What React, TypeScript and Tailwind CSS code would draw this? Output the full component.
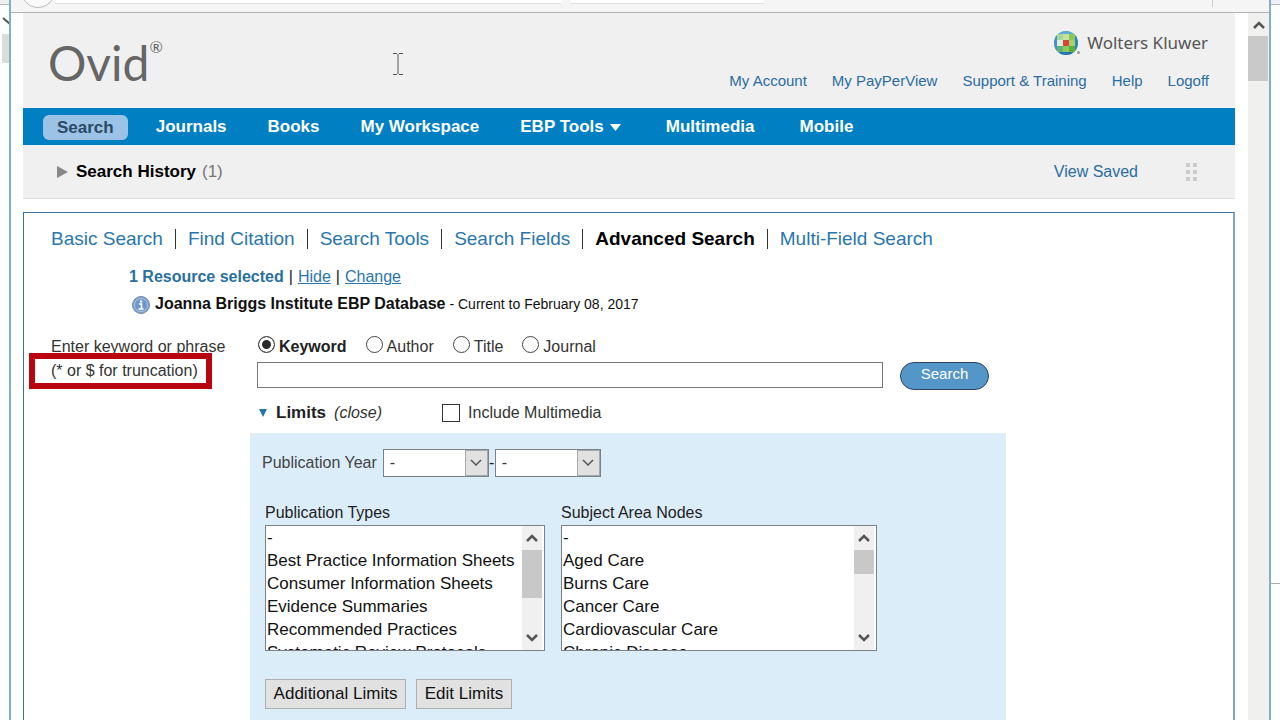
import { useState } from "react";
import type { ReactNode } from "react";

const accountLinks = ["My Account", "My PayPerView", "Support & Training", "Help", "Logoff"];

const searchModes = [
    "Basic Search",
    "Find Citation",
    "Search Tools",
    "Search Fields",
    "Advanced Search",
    "Multi-Field Search",
];

const fields = ["Keyword", "Author", "Title", "Journal"];

const publicationTypes = [
    "-",
    "Best Practice Information Sheets",
    "Consumer Information Sheets",
    "Evidence Summaries",
    "Recommended Practices",
    "Systematic Review Protocols",
];

const subjectNodes = ["-", "Aged Care", "Burns Care", "Cancer Care", "Cardiovascular Care", "Chronic Disease"];

const Chevron = ({ up = false, thin = false }: { up?: boolean; thin?: boolean }) => (
    <svg width="12" height="8" viewBox="0 0 12 8" fill="none" stroke="#555" strokeWidth={thin ? 1.5 : 2.5}>
        <path d={up ? "M1 7 6 2l5 5" : "M1 1l5 5 5-5"} />
    </svg>
);

const WoltersKluwerMark = () => (
    <svg width="28" height="26" viewBox="0 0 28 26" aria-hidden="true">
        <defs>
            <clipPath id="globe">
                <circle cx="13" cy="13" r="12" />
            </clipPath>
        </defs>
        <g clipPath="url(#globe)">
            <rect width="26" height="26" fill="#7cc04b" />
            <rect width="26" height="4" fill="#5aa9d6" />
            <rect y="22" width="26" height="4" fill="#2273b8" />
            <rect width="4" height="26" fill="#3e93cb" />
            <rect x="22" width="4" height="26" fill="#2f86c4" />
            <rect x="4" y="4" width="6" height="6" fill="#a5d6a0" />
            <rect x="10" y="4" width="6" height="6" fill="#c5e3a0" />
            <rect x="16" y="4" width="6" height="6" fill="#8cc95a" />
            <rect x="4" y="10" width="6" height="6" fill="#dcefd8" />
            <rect x="16" y="10" width="6" height="6" fill="#a4d468" />
            <rect x="4" y="16" width="6" height="6" fill="#62b07c" />
            <rect x="10" y="16" width="6" height="6" fill="#8ccb55" />
            <rect x="16" y="16" width="6" height="6" fill="#5eb13f" />
            <rect x="10" y="10" width="6" height="6" fill="#d8453c" />
        </g>
        <circle cx="25.500" cy="22.500" r="1.500" fill="#999" />
    </svg>
);

const InfoIcon = () => (
    <svg width="20" height="20" viewBox="0 0 20 20" aria-hidden="true">
        <circle cx="10" cy="11" r="8.500" fill="#7fa5d6" stroke="#74869f" />
        <circle cx="10" cy="11" r="6.500" fill="#6d96cf" stroke="#a9c3e6" />
        <circle cx="10" cy="7.500" r="1.300" fill="#fff" />
        <path d="M8 10h2.500v5M7.500 15h5" fill="none" stroke="#fff" strokeWidth="1.500" />
    </svg>
);

const NavItem = ({ children, className = "" }: { children: ReactNode; className?: string }) => (
    <li className={className}>
        <a href="#" className="flex items-center gap-1.5 whitespace-nowrap">{children}</a>
    </li>
);

const YearSelect = ({ label }: { label: string }) => (
    <div className="relative w-[106px]">
        <select
            aria-label={label}
            className="block h-7 w-full appearance-none border border-[#7a8288] bg-white px-1.5 text-base text-[#333]"
        >
            <option>-</option>
        </select>
        <span className="pointer-events-none absolute inset-y-px right-px flex w-[23px] items-center justify-center border border-[#a5a8aa] bg-[#e1e1e1]">
            <Chevron thin />
        </span>
    </div>
);

type ListBoxProps = { id: string; label: string; options: string[]; width: string; thumb: string };

const ListBox = ({ id, label, options, width, thumb }: ListBoxProps) => (
    <div className={width}>
        <label htmlFor={id} className="block h-6 text-base leading-6">{label}</label>
        <div className="flex h-[126px] border border-[#7a8288] bg-white">
            <select id={id} multiple size={5} className="min-w-0 flex-1 overflow-hidden pt-0.5 text-[17px] text-[#111]">
                {options.map((option) => (
                    <option key={option} className="h-[23px] px-px py-0 leading-[23px]">{option}</option>
                ))}
            </select>
            <div className="mr-0.5 flex w-5 flex-col items-center bg-[#f0f0f0]">
                <span className="flex h-6 items-center"><Chevron up /></span>
                <span className={`w-full bg-[#c8c8c8] ${thumb}`} />
                <span className="mt-auto flex h-6 items-center"><Chevron /></span>
            </div>
        </div>
    </div>
);

const Header = () => (
    <header className="flex h-[95px] justify-between bg-[#f0f0f0] pr-[26px] pl-[25px]">
        <div className="flex pt-[18px] text-[#666]">
            <span className="font-[Lato] text-5xl leading-[64px]">Ovid</span>
            <span className="pt-1 font-[Lato] text-base leading-6">®</span>
        </div>
        <div className="flex flex-col items-end pt-4">
            <div className="flex items-center gap-1.5 pr-px text-[#555]">
                <WoltersKluwerMark />
                <span className="font-['Noto_Sans'] text-[17px] leading-7">Wolters Kluwer</span>
            </div>
            <nav className="mt-3.5 flex gap-[25px] text-[15px] leading-5 text-[#2a6ca3]">
                {accountLinks.map((link) => (
                    <a key={link} href="#" className="whitespace-nowrap">{link}</a>
                ))}
            </nav>
        </div>
    </header>
);

const MainNav = () => (
    <nav className="bg-[#007fc3]">
        <ul className="flex h-[37px] items-center pt-px pl-5 text-[17px] font-bold text-white">
            <li className="mr-7">
                <a href="#" className="block rounded-md bg-[#9cc3e6] px-3.5 text-[#2b4a66] leading-[25px]">Search</a>
            </li>
            <NavItem className="mr-[41px]">Journals</NavItem>
            <NavItem className="mr-[41px]">Books</NavItem>
            <NavItem className="mr-[41px]">My Workspace</NavItem>
            <NavItem className="mr-[45px]">
                EBP Tools
                <svg width="11" height="7" viewBox="0 0 11 7" fill="#fff"><path d="M0 0h11L5.500 7z" /></svg>
            </NavItem>
            <NavItem className="mr-[45px]">Multimedia</NavItem>
            <NavItem>Mobile</NavItem>
        </ul>
    </nav>
);

const SearchHistory = () => (
    <section className="flex h-[54px] items-center border-b border-[#dcdcdc] bg-[#f0f0f0] pr-[38px] pl-[34px]">
        <button type="button" className="flex items-center gap-2 text-[17px]">
            <svg width="11" height="12" viewBox="0 0 11 12" fill="#888"><path d="M0 0l11 6-11 6z" /></svg>
            <span className="font-bold">Search History</span>
        </button>
        <span className="ml-1.5 text-[17px] text-[#777]">(1)</span>
        <a href="#" className="mr-12 ml-auto text-base text-[#2a6ca3]">View Saved</a>
        <svg width="11" height="18" viewBox="0 0 11 18" fill="#ccc">
            <path d="M0 0h4v4H0zM7 0h4v4H7zM0 7h4v4H0zM7 7h4v4H7zM0 14h4v4H0zM7 14h4v4H7z" />
        </svg>
    </section>
);

const Limits = () => (
    <div className="w-full max-w-[756px] flex-1 bg-[#daedf9] pt-4 pl-3 text-[#222]">
        <div className="flex items-center">
            <span className="mr-1.5 text-base text-[#444]">Publication Year</span>
            <YearSelect label="Publication year from" />
            <span className="w-1.5 text-center text-base">-</span>
            <YearSelect label="Publication year to" />
        </div>
        <div className="mt-6 flex gap-4 pl-[3px]">
            <ListBox id="types" label="Publication Types" options={publicationTypes} width="w-[280px]" thumb="h-12" />
            <ListBox id="nodes" label="Subject Area Nodes" options={subjectNodes} width="w-[316px]" thumb="h-6" />
        </div>
        <div className="mt-7 flex gap-2.5 pl-[3px] text-[17px] text-[#111]">
            <button type="button" className="h-[30px] w-[141px] border border-[#adadad] bg-[#e1e1e1] whitespace-nowrap">Additional Limits</button>
            <button type="button" className="h-[30px] w-24 border border-[#adadad] bg-[#e1e1e1] whitespace-nowrap">Edit Limits</button>
        </div>
    </div>
);

const SearchPanel = () => {

    const [field, setField] = useState<string>("Keyword");
    const [query, setQuery] = useState<string>("");

    return (
        <section className="mt-[13px] flex flex-1 flex-col border border-r-2 border-b-0 border-[#33709f] border-r-[#7fa9c2] bg-white">
            <nav className="mt-3 flex h-7 items-center pl-[27px] text-[19px] whitespace-nowrap">
                {searchModes.map((mode, i) => (
                    <div key={mode} className="flex items-center">
                        {i > 0 && <span className="mx-3 h-5 w-px bg-[#333]" />}
                        <a href="#" className={mode === "Advanced Search" ? "font-bold text-black" : "text-[#2a76ac]"}>{mode}</a>
                    </div>
                ))}
            </nav>

            <div className="mt-3 pl-[105px] text-base">
                <p className="flex h-6 items-center gap-[5px] text-[#222]">
                    <b className="text-[#2a6f9f]">1 Resource selected</b>|
                    <a href="#" className="text-[#2a76ac] underline">Hide</a>|
                    <a href="#" className="text-[#2a76ac] underline">Change</a>
                </p>
                <p className="flex h-[30px] items-center gap-1 pl-0.5 text-[#111]">
                    <InfoIcon />
                    <b>Joanna Briggs Institute EBP Database</b>
                    <span className="text-sm">- Current to February 08, 2017</span>
                </p>
            </div>

            <form className="mt-4 flex flex-1" onSubmit={(e) => e.preventDefault()}>
                <div className="w-[226px] shrink-0 pl-[27px] text-base leading-6 text-[#333]">
                    <label htmlFor="query">Enter keyword or phrase</label>
                    <div className="relative">
                        (* or $ for truncation)
                        <span className="pointer-events-none absolute -top-1.5 -left-[22px] h-9 w-[183px] border-6 border-[#b90510]" />
                    </div>
                </div>

                <div className="flex min-w-0 flex-1 flex-col">
                    <div className="flex h-6 items-center gap-[19px] pl-2">
                        {fields.map((name) => (
                            <label key={name} className={`flex items-center gap-1 text-base ${field === name ? "font-bold text-[#222]" : "text-[#333]"}`}>
                                <input
                                    type="radio"
                                    name="field"
                                    checked={field === name}
                                    onChange={() => setField(name)}
                                    className="mb-1.5 size-[17px] appearance-none rounded-full border border-[#444] bg-white checked:bg-[#2b2b2b] checked:shadow-[inset_0_0_0_3px_white]"
                                />
                                {name}
                            </label>
                        ))}
                    </div>
                    <div className="mt-[3px] flex gap-[17px] pl-[7px]">
                        <input
                            id="query"
                            type="text"
                            value={query}
                            onChange={(e) => setQuery(e.target.value)}
                            className="h-[26px] w-full max-w-[626px] border border-[#777] bg-white px-1"
                        />
                        <button type="submit" className="h-7 w-[89px] rounded-full border border-[#2e3f66] bg-[#5596c8] pb-1 text-[15px] leading-5 text-white">
                            Search
                        </button>
                    </div>
                    <div className="mt-[11px] mb-2 flex h-6 items-center pl-2 text-base text-[#333]">
                        <button type="button" className="flex items-center gap-2">
                            <svg width="10" height="8" viewBox="0 0 10 8" fill="#2077a8"><path d="M1 0h8L5 8z" /></svg>
                            <b className="text-[17px] text-[#222]">Limits</b>
                            <i>(close)</i>
                        </button>
                        <label className="ml-[60px] flex items-center gap-2">
                            <input type="checkbox" className="size-[18px] appearance-none border border-[#333] bg-white checked:bg-[#333]" />
                            Include Multimedia
                        </label>
                    </div>
                    <Limits />
                </div>
            </form>
        </section>
    );
};

const App = () => {
    return (
        <div className="flex h-screen overflow-hidden bg-[#fcfdfe] font-['Liberation_Sans',Arial,sans-serif]">
            <div className="w-[9px] shrink-0 overflow-hidden">
                <div className="h-[5px] border-b border-[#b5b5b5] bg-[#eee]" />
                <svg className="mt-3" width="9" height="10" fill="none" stroke="#555" strokeWidth="2"><path d="M3 1l7 6" /></svg>
                <div className="mt-[7px] ml-0.5 h-[29px] bg-[#dcdcdc]" />
            </div>

            <div className="relative flex min-w-0 flex-1 flex-col border-x-2 border-[#7fb0cb] bg-white">
                <div className="flex h-[13px] shrink-0 items-start overflow-hidden border-b border-[#b4b4b4] bg-[#f5f5f5]">
                    <div className="-mt-[26px] ml-2.5 size-[34px] shrink-0 rounded-full border border-[#bbb] bg-[#fafafa]" />
                    <div className="h-1 w-[506px] border-b border-[#ddd] bg-white" />
                    <div className="ml-2.5 h-1 w-[193px] border-b border-[#ddd] bg-white" />
                    <div className="mr-[56px] ml-auto h-[7px] w-px bg-[#ccc]" />
                </div>

                <div className="flex min-h-0 flex-1">
                    <main className="mr-[13px] ml-3 flex min-w-0 flex-1 flex-col">
                        <Header />
                        <MainNav />
                        <SearchHistory />
                        <SearchPanel />
                    </main>
                    <div className="flex w-[21px] shrink-0 flex-col items-center bg-[#f0f0ef]">
                        <span className="flex h-[23px] items-center"><Chevron up /></span>
                        <span className="mr-px h-[45px] w-5 bg-[#c9c9c9]" />
                    </div>
                </div>

                {/* text cursor resting over the header */}
                <svg className="absolute top-[53px] left-[382px]" width="10" height="22" fill="none" stroke="#555">
                    <path d="M0 .5h4M6 .5h4M0 21.500h4M6 21.500h4M5 1v20" />
                </svg>
            </div>

            <div className="w-[9px] shrink-0">
                <div className="h-[5px] border-b border-[#b5b5b5] bg-[#eef1f7]" />
                <div className="h-[579px] border-b border-[#aaa]" />
            </div>
        </div>
    );
};

export default App;
